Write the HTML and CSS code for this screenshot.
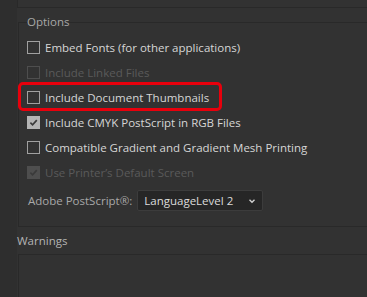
FILE: index.html
```html
<!DOCTYPE html>
<html>
<head>
<meta charset="utf-8">
<link rel="stylesheet" href="styles.css">
</head>
<body>
<div class="page">
  <div class="top-panel"></div>
  <fieldset class="group options">
    <legend>Options</legend>
    <div class="rows">
      <label class="row"><span class="box"></span><span>Embed Fonts (for other applications)</span></label>
      <label class="row disabled"><span class="box"></span><span>Include Linked Files</span></label>
      <label class="row highlight"><span class="box"></span><span>Include Document Thumbnails</span></label>
      <label class="row"><span class="box checked"><svg viewBox="0 0 12 12" width="12" height="12"><path d="M2.6 6.2 L5 8.6 L9.6 3.4" fill="none" stroke="#3a3a3a" stroke-width="1.8"/></svg></span><span>Include CMYK PostScript in RGB Files</span></label>
      <label class="row"><span class="box"></span><span>Compatible Gradient and Gradient Mesh Printing</span></label>
      <label class="row disabled"><span class="box checked"><svg viewBox="0 0 12 12" width="12" height="12"><path d="M2.6 6.2 L5 8.6 L9.6 3.4" fill="none" stroke="#3a3a3a" stroke-width="1.8"/></svg></span><span>Use Printer’s Default Screen</span></label>
    </div>
    <div class="ps-row">
      <span class="ps-label">Adobe PostScript®:</span>
      <div class="select"><span>LanguageLevel 2</span><svg viewBox="0 0 10 10" width="10" height="10"><path d="M2.5 3.8 L5 6.2 L7.5 3.8" fill="none" stroke="#d0d0d0" stroke-width="1.4"/></svg></div>
    </div>
  </fieldset>
  <div class="warnings-title">Warnings</div>
  <div class="warnings-box"></div>
</div>
</body>
</html>
```
FILE: styles.css
```css
html, body {
  margin: 0;
  padding: 0;
  background: #2e2e2e;
  width: 367px;
  height: 297px;
  overflow: hidden;
  font-family: "Open Sans", "Noto Sans", sans-serif;
  font-size: 11.5px;
}
.page {
  margin-left: 17px;
  height: 297px;
  background: #323232;
  display: flex;
  flex-direction: column;
}
.top-panel {
  height: 7px;
  border-left: 1px solid #292929;
  border-bottom: 1px solid #292929;
}
.group {
  margin: 6px 0 0 1px;
  padding: 0 0 0 9px;
  border: 1px solid #292929;
  border-right: none;
  height: 213px;
  box-sizing: border-box;
}
.group legend {
  padding: 0;
  margin-left: -1px;
  color: #a8a8a8;
  line-height: 16px;
}
.rows {
  display: flex;
  flex-direction: column;
  gap: 9px;
  margin-top: 9px;
}
.row {
  display: flex;
  align-items: center;
  gap: 5px;
  height: 16px;
  color: #d6d6d6;
  position: relative;
}
.row.disabled { color: #5a5a5a; }
.box {
  width: 11px;
  height: 11px;
  border: 1px solid #a0a0a0;
  box-sizing: content-box;
  display: flex;
  align-items: center;
  justify-content: center;
  margin-left: -1px;
}
.box svg { width: 11px; height: 11px; }
.row.disabled .box { border-color: #4e4e4e; }
.box.checked { background: #b4b4b4; border-color: #b4b4b4; }
.row.disabled .box.checked { background: #4e4e4e; border-color: #4e4e4e; }
.row.highlight::before {
  content: "";
  position: absolute;
  left: -10px;
  top: -7px;
  width: 204px;
  height: 29px;
  border: 3px solid #e8000c;
  border-radius: 5px;
  box-sizing: border-box;
}
.ps-row {
  display: flex;
  align-items: center;
  gap: 5px;
  margin-top: 10px;
}
.ps-label { color: #a8a8a8; }
.select {
  width: 126px;
  height: 21px;
  box-sizing: border-box;
  background: #262626;
  border: 1px solid #3c3c3c;
  border-radius: 2px;
  display: flex;
  align-items: center;
  justify-content: space-between;
  padding: 0 5px 0 6px;
  color: #dcdcdc;
}
.warnings-title {
  color: #b4b4b4;
  margin-top: 7px;
  line-height: 14px;
}
.warnings-box {
  margin-top: 6px;
  margin-left: 1px;
  flex: 1;
  border-left: 1px solid #292929;
  border-top: 1px solid #292929;
}
```
